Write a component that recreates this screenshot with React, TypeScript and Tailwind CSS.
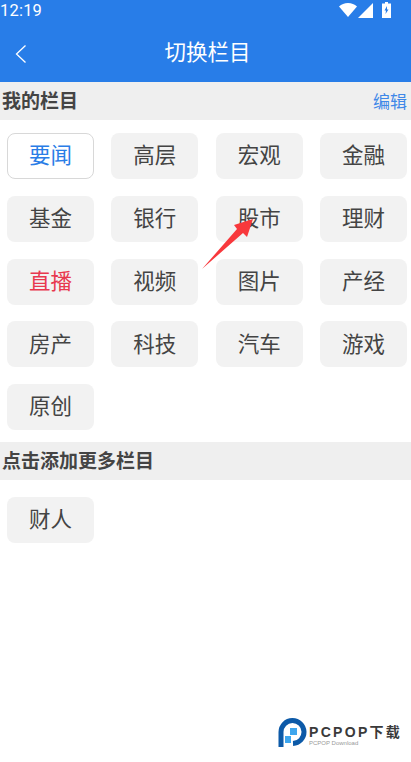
import React from "react";

const cjk = { fontFamily: '"Noto Sans CJK SC", sans-serif' };
const rows = ["要闻","高层","宏观","金融","基金","银行","股市","理财","直播","视频","图片","产经","房产","科技","汽车","游戏","原创"];

function Chip({ t }: { t: string }) {
  const first = t === "要闻";
  const red = t === "直播";
  return (
    <div className={`h-[46px] rounded-lg flex items-center justify-center text-[21.5px] pb-[3px] ${first ? "bg-white border-[1.5px] border-[#d8d8d8] text-[#2a7de6]" : "bg-[#f2f2f2]"} ${red ? "text-[#e8384f]" : ""} ${!first && !red ? "text-[#444444]" : ""}`}>
      {t}
    </div>
  );
}

export default function App() {
  return (
    <div className="relative w-[411px] h-[762px] bg-white overflow-hidden" style={cjk}>
      <div className="h-[82px] bg-[#287de8] text-white">
        <div className="h-6 flex items-center justify-between pl-0 pr-[20px] pb-[4px]">
          <span className="text-[16.5px] leading-none tracking-[0.2px] mt-[3px]" style={{ fontFamily: "Roboto, sans-serif" }}>12:19</span>
          <div className="flex items-center gap-[1px]">
            <svg width="18" height="14" viewBox="0 0 18 14" fill="white"><path d="M0 3.500C2.400 1.200 5.500 0 9 0s6.600 1.200 9 3.500L9 14z" /></svg>
            <svg width="15" height="15" viewBox="0 0 15 15" fill="white"><path d="M15 0v15H0z" /></svg>
            <svg className="ml-[8px]" width="9" height="16" viewBox="0 0 9 16" fill="white"><path d="M3 0h3v1.500h3V16H0V1.500h3z" /><path d="M5 4 2.500 8.500h1.500L3.500 12 6.500 7.500H5z" fill="#287de8" /></svg>
          </div>
        </div>
        <div className="relative h-[58px] flex items-center justify-center text-[21.5px] pb-[3px] pl-[4px]">
          <svg className="absolute left-[15px] top-[20px]" width="12" height="20" viewBox="0 0 12 20" fill="none" stroke="white" strokeWidth="1.300"><path d="M10.500 1.500 1.500 10l9 8.500" /></svg>
          切换栏目
        </div>
      </div>
      <div className="h-[38px] bg-[#efefef] flex items-center justify-between pl-[2px] pr-[4px] pb-[1px]">
        <span className="text-[19px] font-bold text-[#444444]">我的栏目</span>
        <span className="text-[17px] text-[#3f88e8]">编辑</span>
      </div>
      <div className="grid grid-cols-4 gap-x-[17.33px] gap-y-[16.75px] pl-[7px] pr-[4px] pt-[13px] pb-[12px]">
        {rows.map((t) => <Chip key={t} t={t} />)}
      </div>
      <div className="h-[38px] bg-[#efefef] flex items-center pl-[2px] pb-[1px]">
        <span className="text-[19px] font-bold text-[#444444]">点击添加更多栏目</span>
      </div>
      <div className="grid grid-cols-4 gap-x-[17.33px] pl-[7px] pr-[4px] pt-[17px]">
        <Chip t="财人" />
      </div>
      {/* annotation arrow */}
      <svg className="absolute left-[200px] top-[216px]" width="54" height="54" viewBox="0 0 54 54">
        <path d="M2 53 37 13 34 9 53 3 47 21 43 17z" fill="#f8383c" />
      </svg>
      {/* watermark */}
      <div className="absolute left-[278px] top-[718px] flex items-start">
        <svg width="30" height="30" viewBox="0 0 30 30">
          <path d="M3 29V14a11.500 11.500 0 1 1 12 11.500" fill="none" stroke="#0d5aa8" strokeWidth="5" />
          <rect x="12" y="10" width="7" height="7" fill="#3ea6ee" />
          <path d="M7 18h6v7H7z" fill="#3ea6ee" />
        </svg>
        <div className="ml-[1px] flex flex-col">
          <span className="text-[14px] leading-[17px] mt-[6px] font-bold tracking-[2.3px] text-[#3a3a3a] whitespace-nowrap" style={{ fontFamily: '"Liberation Sans", "Noto Sans CJK SC", sans-serif' }}>PCPOP下载</span>
          <span className="text-[6px] leading-[7px] -mt-[1px] text-[#999999]" style={{ fontFamily: '"Liberation Sans", sans-serif' }}>PCPOP Download</span>
        </div>
      </div>
    </div>
  );
}
